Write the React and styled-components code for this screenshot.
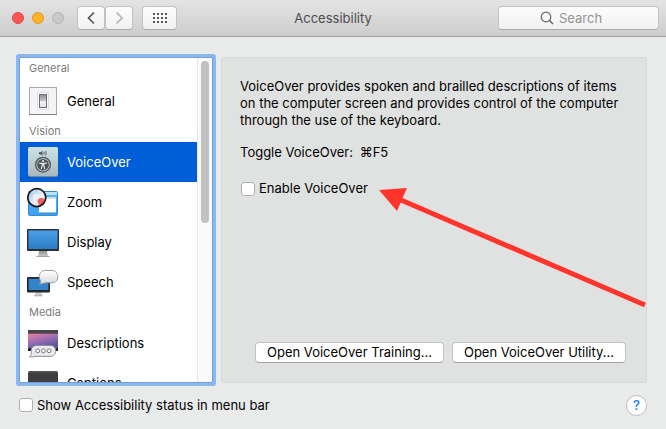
import { useState } from 'react';
import styled, { createGlobalStyle } from 'styled-components';

const SECTIONS = [
  { title: 'General', items: ['General'] },
  { title: 'Vision', items: ['VoiceOver', 'Zoom', 'Display', 'Speech'] },
  { title: 'Media', items: ['Descriptions', 'Captions'] },
];

const ICONS = {
  General: GeneralIcon,
  VoiceOver: VoiceOverIcon,
  Zoom: ZoomIcon,
  Display: DisplayIcon,
  Speech: SpeechIcon,
  Descriptions: DescriptionsIcon,
  Captions: CaptionsIcon,
};

function App() {
  const [selected, setSelected] = useState('VoiceOver');

  return (
    <>
      <GlobalStyle />
      <Window>
        <TitleBar>
          <Tools>
            <Lights>
              <Light type="button" aria-label="Close" $fill="#fc5753" $edge="#df4744" />
              <Light type="button" aria-label="Minimize" $fill="#fdb32a" $edge="#de9a22" />
              <Light type="button" aria-label="Full screen" $fill="#c9c9c9" $edge="#b3b3b3" />
            </Lights>
            <NavGroup>
              <ToolButton type="button" aria-label="Back" $color="#555">
                <Chevron d="M10 1.5 L4.5 7 L10 12.5" />
              </ToolButton>
              <ToolButton type="button" aria-label="Forward" $color="#b5b5b5">
                <Chevron d="M4.5 1.5 L10 7 L4.5 12.5" />
              </ToolButton>
            </NavGroup>
            <ToolButton type="button" aria-label="Show all" $wide $color="#555">
              <GridIcon />
            </ToolButton>
          </Tools>
          <Title>Accessibility</Title>
          <Search>
            <svg width="14" height="14" viewBox="0 0 14 14" fill="none" stroke="#666">
              <circle cx="6" cy="6" r="4.8" strokeWidth="1.2" />
              <path d="M9.5 9.5 L13 13" strokeWidth="1.5" />
            </svg>
            <SearchInput type="text" placeholder="Search" aria-label="Search" />
          </Search>
        </TitleBar>

        <Main>
          <Sidebar>
            <List>
              {SECTIONS.map(section => (
                <Section key={section.title}>
                  <SectionTitle>{section.title}</SectionTitle>
                  {section.items.map(item => {
                    const Icon = ICONS[item];
                    return (
                      <Item
                        key={item}
                        type="button"
                        $active={item === selected}
                        onClick={() => setSelected(item)}
                      >
                        <Icon />
                        {item}
                      </Item>
                    );
                  })}
                </Section>
              ))}
            </List>
            <Track>
              <Thumb />
            </Track>
          </Sidebar>

          <Panel>
            <Text>
              VoiceOver provides spoken and brailled descriptions of items
              <br />
              on the computer screen and provides control of the computer
              <br />
              through the use of the keyboard.
            </Text>
            <Text>
              Toggle VoiceOver: <Shortcut>⌘F5</Shortcut>
            </Text>
            <Option>
              <CheckLabel>
                <Checkbox type="checkbox" />
                Enable VoiceOver
              </CheckLabel>
            </Option>
            <Actions>
              <PushButton type="button">Open VoiceOver Training...</PushButton>
              <PushButton type="button">Open VoiceOver Utility...</PushButton>
            </Actions>
            <Arrow viewBox="0 0 270 124">
              <path d="M25 14 L269 119" stroke="#ff352c" strokeWidth="5" />
              <path d="M3 4 L31 2 L21 25 Z" fill="#ff352c" />
            </Arrow>
          </Panel>
        </Main>

        <Footer>
          <CheckLabel>
            <Checkbox type="checkbox" />
            Show Accessibility status in menu bar
          </CheckLabel>
          <HelpButton type="button">?</HelpButton>
        </Footer>
      </Window>
    </>
  );
}

function Chevron({ d }) {
  return (
    <svg width="14" height="14" viewBox="0 0 14 14" fill="none">
      <path d={d} stroke="currentColor" strokeWidth="1.7" />
    </svg>
  );
}

function GridIcon() {
  return (
    <svg width="14" height="10" viewBox="0 0 14 10" fill="currentColor">
      {[0, 4, 8].map(y =>
        [0, 4, 8, 12].map(x => (
          <rect key={`${x}-${y}`} x={x} y={y} width="2" height="2" />
        )),
      )}
    </svg>
  );
}

function GeneralIcon() {
  return (
    <IconSvg viewBox="0 0 32 32">
      <defs>
        <linearGradient id="switch" x1="0" y1="0" x2="0" y2="1">
          <stop offset="0" stopColor="#8e8e90" />
          <stop offset="0.5" stopColor="#c9c9cb" />
          <stop offset="0.55" stopColor="#f4f4f5" />
          <stop offset="1" stopColor="#e2e2e4" />
        </linearGradient>
      </defs>
      <rect x="2.5" y="2.5" width="27" height="27" fill="#f4f4f6" stroke="#a9a9ac" />
      <path d="M2 29.5 H30" stroke="#808084" />
      <rect x="10" y="7" width="12" height="18" rx="2" fill="#dcdcdf" />
      <rect x="11" y="8" width="10" height="16" rx="1" fill="#fff" />
      <rect x="12.5" y="9.5" width="7" height="13" fill="url(#switch)" stroke="#6e6e72" />
    </IconSvg>
  );
}

function VoiceOverIcon() {
  return (
    <IconSvg viewBox="0 0 32 32">
      <defs>
        <linearGradient id="voPlate" x1="0" y1="0" x2="0" y2="1">
          <stop offset="0" stopColor="#cfe2e8" />
          <stop offset="1" stopColor="#a9b8bd" />
        </linearGradient>
      </defs>
      <rect x="1" y="1" width="30" height="30" rx="2" fill="#7b8a91" />
      <rect x="1" y="1" width="30" height="29" rx="2" fill="url(#voPlate)" />
      <path d="M12 6.3 H13.5 L15.5 4.7 V9.7 L13.5 8.2 H12 Z" fill="#4d565b" />
      <path
        d="M16.8 5.8 Q17.8 7.2 16.8 8.7 M18.4 4.8 Q20.2 7.2 18.4 9.7"
        fill="none"
        stroke="#4d565b"
        strokeWidth="0.9"
      />
      <circle cx="16" cy="18.7" r="7.4" fill="#b6c3c8" stroke="#4d5357" strokeWidth="1.2" />
      <circle cx="16" cy="18.7" r="5.8" fill="#4d5357" />
      <circle cx="16" cy="15.1" r="1.1" fill="#dfe9ec" />
      <path
        d="M12.2 17.1 L16 17.6 L19.8 17.1 M16 17.4 V19.8 M15.1 17.4 V20 L14.3 23 M16.9 17.4 V20 L17.7 23"
        fill="none"
        stroke="#dfe9ec"
        strokeWidth="1.1"
      />
    </IconSvg>
  );
}

function ZoomIcon() {
  return (
    <IconSvg viewBox="0 0 32 32">
      <defs>
        <linearGradient id="zoomBack" x1="0" y1="0" x2="0" y2="1">
          <stop offset="0" stopColor="#5cb8f6" />
          <stop offset="1" stopColor="#3b9ff0" />
        </linearGradient>
        <linearGradient id="lens" x1="0" y1="0" x2="1" y2="1">
          <stop offset="0" stopColor="#8ec3ee" />
          <stop offset="0.5" stopColor="#dfe9f4" />
          <stop offset="1" stopColor="#f5f5f8" />
        </linearGradient>
      </defs>
      <rect x="1.5" y="5.5" width="29" height="24" rx="1" fill="url(#zoomBack)" stroke="#3689cc" />
      <rect x="2" y="6" width="28" height="3" fill="#b9e3f8" />
      <rect x="12" y="12" width="17" height="15.5" fill="#2a7fc4" opacity="0.6" />
      <rect x="12" y="11" width="17" height="15.5" fill="#fbfcfe" />
      <rect x="12" y="11" width="17" height="2" fill="#d5dce4" />
      <circle cx="9.8" cy="11.6" r="9" fill="url(#lens)" />
      <rect x="6" y="8" width="11" height="9" rx="2" fill="#ecf0f6" />
      <circle cx="14.3" cy="15.6" r="3.7" fill="#f0605c" />
      <circle cx="9.8" cy="11.6" r="9" fill="none" stroke="#17191c" strokeWidth="1.7" />
    </IconSvg>
  );
}

function DisplayIcon() {
  return (
    <IconSvg viewBox="0 0 32 32">
      <defs>
        <linearGradient id="screen" x1="0" y1="0" x2="0" y2="1">
          <stop offset="0" stopColor="#4ba0e6" />
          <stop offset="1" stopColor="#2b7cc6" />
        </linearGradient>
        <linearGradient id="stand" x1="0" y1="0" x2="0" y2="1">
          <stop offset="0" stopColor="#8f8f8f" />
          <stop offset="1" stopColor="#d2d2d2" />
        </linearGradient>
      </defs>
      <path d="M12 25 H20 L20.6 29 L22.5 31 H9.5 L11.4 29 Z" fill="url(#stand)" />
      <path d="M9.5 30.5 H22.5" stroke="#a2a2a2" />
      <rect x="0" y="3" width="32" height="22" rx="1" fill="#2b2e32" />
      <rect x="1.4" y="4.4" width="29.2" height="18.6" fill="url(#screen)" />
    </IconSvg>
  );
}

function SpeechIcon() {
  return (
    <IconSvg viewBox="0 0 32 32">
      <defs>
        <linearGradient id="bubble" x1="0" y1="0" x2="0" y2="1">
          <stop offset="0" stopColor="#ffffff" />
          <stop offset="1" stopColor="#d9dadd" />
        </linearGradient>
      </defs>
      <path d="M8.7 26 H14.3 L15.6 30 H7.4 Z" fill="#d0d0d0" />
      <path d="M7.4 29.8 H15.6" stroke="#999" strokeWidth="0.8" />
      <rect x="0" y="11" width="23" height="15.4" rx="1" fill="#24272b" />
      <rect x="1.6" y="12.8" width="19.8" height="11.2" fill="#3484cd" />
      <path
        d="M18 4.5 H25 C29 4.5 30.8 7.5 30.8 10.7 C30.8 14 29 16.8 25 16.8 H18.5 C16.5 17.6 14 18 12.2 17.8 C13.4 17 13.8 16 13.6 14.8 C12.6 13.6 12.3 12.2 12.3 10.7 C12.3 7.5 14 4.5 18 4.5 Z"
        fill="url(#bubble)"
        stroke="#8f9296"
        strokeWidth="0.9"
      />
    </IconSvg>
  );
}

function DescriptionsIcon() {
  return (
    <IconSvg viewBox="0 0 32 32">
      <defs>
        <linearGradient id="sunset" x1="0" y1="0" x2="0.5" y2="1">
          <stop offset="0" stopColor="#ee8096" />
          <stop offset="0.5" stopColor="#a070b4" />
          <stop offset="1" stopColor="#5a56a0" />
        </linearGradient>
      </defs>
      <rect x="1" y="3" width="30" height="21" fill="#1d1d1f" />
      <rect x="1" y="3" width="30" height="3.6" fill="#45474b" />
      <rect x="1" y="6.6" width="30" height="14.6" fill="url(#sunset)" />
      <path
        d="M10 18.4 H23 C27 18.4 28.8 21 28.8 23.9 C28.8 26.9 27 29.4 23 29.4 H8 C6 30 4 30.2 2.4 29.8 C3.6 29 4.4 28 4.4 26.4 C3 21.6 6 18.4 10 18.4 Z"
        fill="#e9e9ee"
        stroke="#84868c"
        strokeWidth="0.9"
      />
      <g fill="#fff" stroke="#74767b" strokeWidth="1">
        <circle cx="10.7" cy="23.8" r="1.9" />
        <circle cx="16.4" cy="23.8" r="1.9" />
        <circle cx="22.1" cy="23.8" r="1.9" />
      </g>
    </IconSvg>
  );
}

function CaptionsIcon() {
  return (
    <IconSvg viewBox="0 0 32 32">
      <rect x="1" y="4" width="30" height="26" rx="2" fill="#3d3d3d" />
      <path d="M2 4.9 H30" stroke="#5e5e5e" />
      <rect x="5" y="20" width="22" height="2" fill="#ddd" />
    </IconSvg>
  );
}

const GlobalStyle = createGlobalStyle`
  * {
    box-sizing: border-box;
  }

  body {
    margin: 0;
    background: #e9ebea;
    color: #000;
    font-family: Inter, 'Liberation Sans', sans-serif;
    font-size: 13px;
    line-height: 17px;
  }

  button,
  input {
    margin: 0;
    padding: 0;
    border: 0;
    color: inherit;
    font: inherit;
  }
`;

const Window = styled.div`
  display: flex;
  flex-direction: column;
  height: 100vh;
`;

const TitleBar = styled.header`
  display: grid;
  grid-template-columns: 1fr auto 1fr;
  align-items: center;
  height: 37px;
  padding: 0 7px;
  border-bottom: 1px solid #a3a3a3;
  background: linear-gradient(#e4e4e4, #cdcdcd);
`;

const Tools = styled.div`
  display: flex;
  align-items: center;
  gap: 9px;
  padding-left: 5px;
`;

const Lights = styled.div`
  display: flex;
  gap: 8px;
  margin-right: 4px;
`;

const Light = styled.button`
  width: 12px;
  height: 12px;
  border: 1px solid ${({ $edge }) => $edge};
  border-radius: 50%;
  background: ${({ $fill }) => $fill};
`;

const NavGroup = styled.div`
  display: flex;
`;

const ToolButton = styled.button`
  display: flex;
  align-items: center;
  justify-content: center;
  width: ${({ $wide }) => ($wide ? 35 : 28)}px;
  height: 24px;
  border: 1px solid #c2c2c2;
  border-bottom-color: #acacac;
  border-radius: 4px;
  background: linear-gradient(#fdfdfd, #f1f1f1);
  color: ${({ $color }) => $color};
`;

const Title = styled.h1`
  margin: 0;
  color: #4c4c4c;
  font-size: 13px;
  font-weight: 400;
`;

const Search = styled.div`
  display: flex;
  align-items: center;
  justify-self: end;
  gap: 5px;
  width: 161px;
  height: 24px;
  padding-left: 41px;
  border: 1px solid #c2c2c2;
  border-bottom-color: #acacac;
  border-radius: 4px;
  background: linear-gradient(#fdfdfd, #f1f1f1);
`;

const SearchInput = styled.input`
  flex: 1;
  min-width: 0;
  outline: none;
  background: none;

  &::placeholder {
    color: #939393;
    opacity: 1;
  }
`;

const Main = styled.main`
  display: flex;
  flex: 1;
  gap: 8px;
  min-height: 0;
  padding: 20px 19px 0;
`;

const Sidebar = styled.nav`
  display: flex;
  flex: none;
  width: 194px;
  border: 1px solid #6e9fe4;
  border-radius: 1px;
  background: #fff;
  box-shadow: 0 0 0 3px #8cb8f0;
`;

const List = styled.div`
  flex: 1;
  overflow: hidden;
`;

const SectionTitle = styled.h2`
  margin: 0;
  padding: 0 9px;
  color: #7b7b7b;
  font-size: 11px;
  font-weight: 400;
  line-height: 21px;
`;

const Section = styled.section`
  &:first-child ${SectionTitle} {
    padding-bottom: 2px;
  }
`;

const Item = styled.button`
  display: flex;
  align-items: center;
  gap: 8px;
  width: 100%;
  height: 40px;
  padding: 0 7px;
  background: ${({ $active }) => ($active ? '#005fd7' : 'transparent')};
  color: ${({ $active }) => ($active ? '#fff' : '#000')};
  text-align: left;
`;

const IconSvg = styled.svg`
  flex: none;
  width: 32px;
  height: 32px;
`;

const Track = styled.div`
  width: 15px;
  padding: 3px;
  border-left: 1px solid #e8e8e8;
  background: #fafafa;
`;

const Thumb = styled.div`
  width: 8px;
  height: 51%;
  border-radius: 4px;
  background: #c1c1c1;
`;

const Panel = styled.section`
  position: relative;
  display: flex;
  flex: 1;
  flex-direction: column;
  align-items: flex-start;
  min-width: 0;
  padding: 20px 20px 19px 18px;
  border: 1px solid #d6d8d7;
  border-radius: 4px;
  background: #e0e2e1;
`;

const Text = styled.p`
  margin: 0 0 15px;
  white-space: nowrap;
`;

const Shortcut = styled.kbd`
  margin-left: 3px;
  font: inherit;
`;

const Option = styled.div`
  padding: 4px 1px;
`;

const CheckLabel = styled.label`
  display: flex;
  align-items: center;
  gap: 4px;
  white-space: nowrap;
`;

const Checkbox = styled.input`
  width: 14px;
  height: 14px;
  border: 1px solid #b0b0b0;
  border-radius: 3px;
  background: #fff;
  appearance: none;

  &:checked {
    border-color: #1a6fe0;
    background: #2f85f7;
  }
`;

const Actions = styled.div`
  display: flex;
  align-self: flex-end;
  gap: 8px;
  margin-top: auto;
`;

const PushButton = styled.button`
  height: 21px;
  padding: 0 11px;
  border: 1px solid #c2c2c2;
  border-bottom-color: #a2a2a2;
  border-radius: 4px;
  background: #fff;
  white-space: nowrap;
`;

const Arrow = styled.svg`
  position: absolute;
  top: 128px;
  right: 0;
  width: 270px;
  height: 124px;
  pointer-events: none;
`;

const Footer = styled.footer`
  display: flex;
  align-items: center;
  justify-content: space-between;
  height: 46px;
  padding: 0 19px 2px;
`;

const HelpButton = styled.button`
  width: 21px;
  height: 21px;
  border: 1px solid #bcbcbc;
  border-radius: 50%;
  background: #fff;
  color: #0b7bff;
  font-size: 13px;
  font-weight: 500;
`;

export default App;
